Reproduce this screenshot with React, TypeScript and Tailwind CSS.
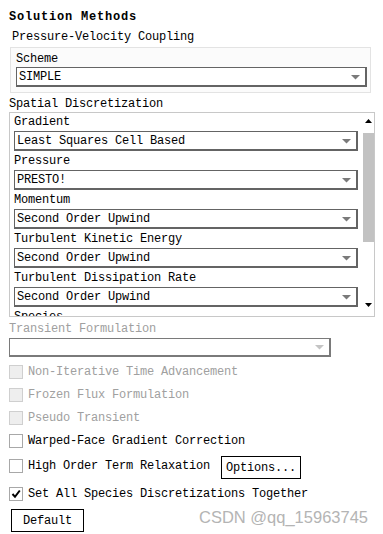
import React from "react";

const mono = { fontFamily: '"Liberation Mono", "DejaVu Sans Mono", monospace' };

function Arrow({ disabled }: { disabled?: boolean }) {
  return (
    <svg width="9" height="6" viewBox="0 0 9 6" className="mr-[5px]">
      <path d="M0 1 L9 1 L4.5 5.5 Z" fill={disabled ? "#c4c4c4" : "#7a7a7a"} />
    </svg>
  );
}

function Select({ value, disabled, className = "" }: { value: string; disabled?: boolean; className?: string }) {
  return (
    <div
      className={`h-[20px] shrink-0 flex items-center justify-between bg-white border-t border-l border-r-2 border-b-2 ${
        disabled ? "border-[#7f7f7f]" : "border-[#646464]"
      } ${className}`}
    >
      <span className="pl-[2px] text-[12px] tracking-[-0.2px] leading-none text-black">{value}</span>
      <Arrow disabled={disabled} />
    </div>
  );
}

function Field({ label, value }: { label: string; value: string }) {
  return (
    <div className="flex flex-col shrink-0">
      <div className="h-[18px] flex items-center text-[12px] tracking-[-0.2px] text-black">{label}</div>
      <Select value={value} />
    </div>
  );
}

function Check({ label, disabled, checked }: { label: string; disabled?: boolean; checked?: boolean }) {
  return (
    <div className="flex items-center gap-[5px] h-[23px]">
      <div
        className={`w-[14px] h-[14px] border flex items-center justify-center ${
          disabled ? "border-[#cfcfcf] bg-[#eeeeee]" : "border-[#a8a8a8] bg-white"
        }`}
      >
        {checked && (
          <svg width="10" height="10" viewBox="0 0 10 10">
            <path d="M1.5 5 L4 7.8 L8.8 1.5" stroke="#000" strokeWidth="2" fill="none" />
          </svg>
        )}
      </div>
      <span className={`text-[12px] tracking-[-0.2px] ${disabled ? "text-[#a0a0a0]" : "text-black"}`}>{label}</span>
    </div>
  );
}

export default function App() {
  return (
    <div className="relative w-[383px] h-[534px] bg-white overflow-hidden" style={mono}>
      <div className="pl-[9px] pt-[8px] flex flex-col">
        <div className="h-[18px] flex items-center text-[12px] font-bold tracking-[0.8px] text-black">Solution Methods</div>
        <div className="h-[21px] flex items-center pl-[3px] text-[12px] tracking-[-0.2px] text-black">
          Pressure-Velocity Coupling
        </div>
        <div className="ml-[1px] w-[361px] h-[46px] border border-[#e3e3e3] bg-[#fbfbfb] px-[5px] pt-[2px]">
          <div className="h-[17px] flex items-center text-[12px] tracking-[-0.2px] text-black">Scheme</div>
          <Select value="SIMPLE" className="w-[351px]" />
        </div>
        <div className="mt-[2px] h-[17px] flex items-center text-[12px] tracking-[-0.2px] text-black">
          Spatial Discretization
        </div>
        <div className="w-[366px] h-[205px] border border-[#c8c8c8] flex overflow-hidden">
          <div className="flex-1 pl-[4px] pr-[4px] flex flex-col gap-[1px] overflow-hidden">
            <Field label="Gradient" value="Least Squares Cell Based" />
            <Field label="Pressure" value="PRESTO!" />
            <Field label="Momentum" value="Second Order Upwind" />
            <Field label="Turbulent Kinetic Energy" value="Second Order Upwind" />
            <Field label="Turbulent Dissipation Rate" value="Second Order Upwind" />
            <div className="h-[18px] shrink-0 flex items-center text-[12px] tracking-[-0.2px] text-black">Species</div>
          </div>
          <div className="w-[12px] flex flex-col items-center">
            <svg width="7" height="4" viewBox="0 0 7 4" className="mt-[6px]">
              <path d="M0 4 L7 4 L3.5 0 Z" fill="#000" />
            </svg>
            <div className="mt-[10px] w-[11px] h-[109px] bg-[#c2c2c2]" />
            <div className="flex-1" />
            <svg width="7" height="4" viewBox="0 0 7 4" className="mb-[9px]">
              <path d="M0 0 L7 0 L3.5 4 Z" fill="#000" />
            </svg>
          </div>
        </div>
        <div className="mt-[3px] h-[17px] flex items-center text-[12px] tracking-[-0.2px] text-[#a0a0a0]">
          Transient Formulation
        </div>
        <div className="mt-[1px] w-[322px] h-[19px] flex items-center justify-end bg-white border-t border-l border-r-2 border-b-2 border-[#7a7a7a]">
          <Arrow disabled />
        </div>
        <div className="mt-[3px] flex flex-col">
          <Check label="Non-Iterative Time Advancement" disabled />
          <Check label="Frozen Flux Formulation" disabled />
          <Check label="Pseudo Transient" disabled />
          <Check label="Warped-Face Gradient Correction" />
          <div className="flex items-center">
            <Check label="High Order Term Relaxation" />
            <div className="ml-[11px] mt-[4px] w-[80px] h-[23px] border border-black flex items-center justify-center text-[12px] tracking-[-0.2px] text-black">
              Options...
            </div>
          </div>
          <div className="mt-[3px]">
            <Check label="Set All Species Discretizations Together" checked />
          </div>
        </div>
        <div className="mt-[4px] ml-[2px] w-[73px] h-[23px] border border-black flex items-center justify-center text-[12px] tracking-[-0.2px] text-black">
          Default
        </div>
      </div>
      <div
        className="absolute left-[199px] top-[505px] text-[16.5px] text-[#b4b4b4]"
        style={{ fontFamily: '"Liberation Sans", Arial, sans-serif' }}
      >
        CSDN @qq_15963745
      </div>
    </div>
  );
}
